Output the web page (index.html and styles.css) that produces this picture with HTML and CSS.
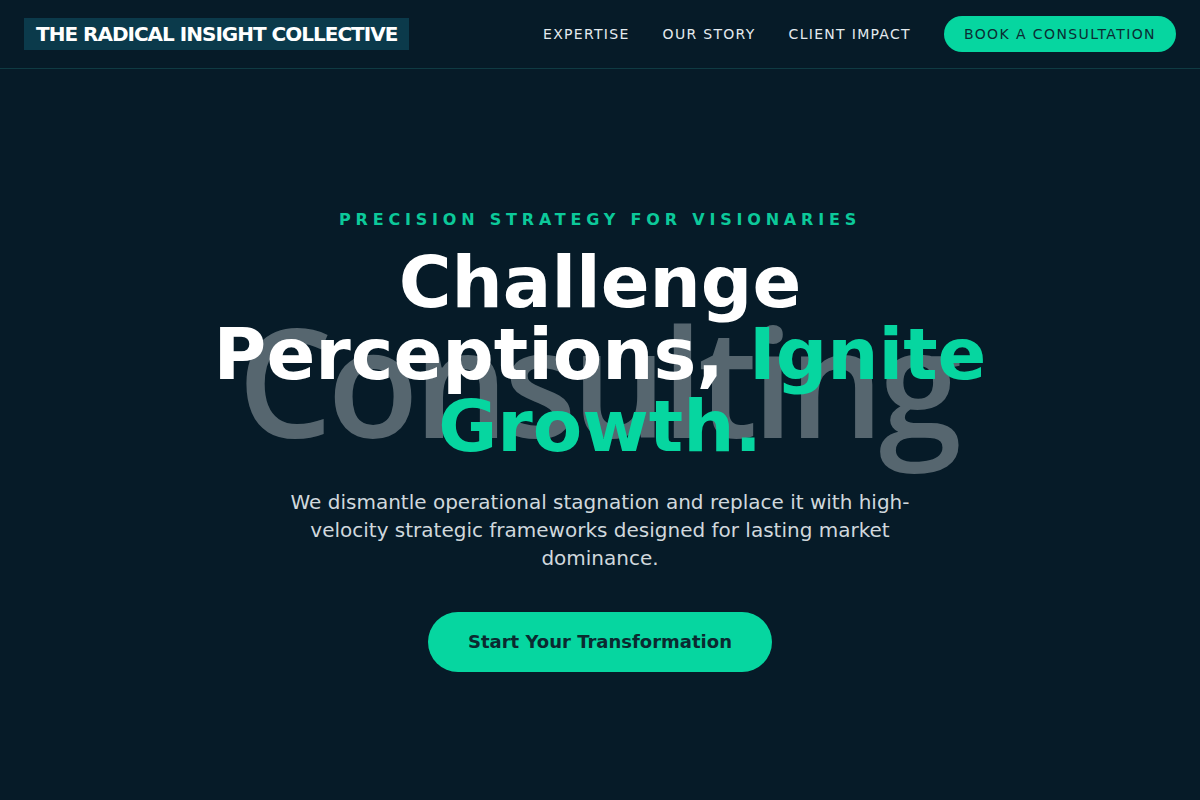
FILE: index.html
```html
<!DOCTYPE html>
<html lang="en">
<head>
<meta charset="utf-8">
<title>The Radical Insight Collective</title>
<link rel="stylesheet" href="styles.css">
</head>
<body>
<header class="site-header">
  <a class="logo" href="#">THE RADICAL INSIGHT COLLECTIVE</a>
  <nav class="nav">
    <a class="nav-link" href="#">EXPERTISE</a>
    <a class="nav-link" href="#">OUR STORY</a>
    <a class="nav-link" href="#">CLIENT IMPACT</a>
    <a class="nav-cta" href="#">BOOK A CONSULTATION</a>
  </nav>
</header>
<main class="hero">
  <div class="hero-inner">
    <p class="tagline">PRECISION STRATEGY FOR VISIONARIES</p>
    <div class="title-wrap">
      <span class="bg-word" aria-hidden="true">Consulting</span>
      <h1 class="title">Challenge Perceptions, <span class="accent">Ignite Growth.</span></h1>
    </div>
    <p class="lead">We dismantle operational stagnation and replace it with high-velocity strategic frameworks designed for lasting market dominance.</p>
    <a class="cta" href="#">Start Your Transformation</a>
  </div>
</main>
</body>
</html>
```
FILE: styles.css
```css
* { box-sizing: border-box; }
html, body { margin: 0; padding: 0; }
body {
  background: #061b28;
  color: #ffffff;
  font-family: "DejaVu Sans", sans-serif;
  min-height: 800px;
}
a { text-decoration: none; }

.site-header {
  height: 69px;
  display: flex;
  align-items: center;
  justify-content: space-between;
  padding: 0 24px;
  border-bottom: 1px solid #0f3b43;
}
.logo {
  display: block;
  background: #0b3a4b;
  color: #ffffff;
  font-weight: 700;
  font-size: 20px;
  letter-spacing: -1px;
  line-height: 32px;
  padding: 0 12px;
  margin-top: -1px;
}
.nav {
  display: flex;
  align-items: center;
  gap: 33px;
}
.nav-link {
  color: #e4eaee;
  font-size: 14px;
  letter-spacing: 1.3px;
}
.nav-cta {
  background: #06d6a0;
  color: #0b2d33;
  font-size: 14px;
  letter-spacing: 1.4px;
  line-height: 20px;
  padding: 8px 20px;
  border-radius: 999px;
}

.hero {
  min-height: 731px;
  display: flex;
  align-items: center;
  justify-content: center;
  padding: 0 24px;
}
.hero-inner {
  display: flex;
  flex-direction: column;
  align-items: center;
  text-align: center;
  margin-top: 12px;
}
.tagline {
  margin: 0 0 16px;
  color: #0cc99a;
  font-size: 16px;
  font-weight: 700;
  letter-spacing: 0.3em;
  line-height: 20px;
}
.title-wrap {
  position: relative;
  max-width: 900px;
}
.bg-word {
  position: absolute;
  left: 50%;
  top: 59px;
  transform: translateX(calc(-50% - 3px));
  font-family: "Open Sans", sans-serif;
  font-size: 150px;
  font-weight: 600;
  line-height: 1;
  letter-spacing: -0.035em;
  color: #56666f;
  white-space: nowrap;
  z-index: 0;
}
.title {
  position: relative;
  z-index: 1;
  margin: 0;
  font-size: 72px;
  font-weight: 700;
  line-height: 1;
  color: #ffffff;
}
.accent { color: #06d6a0; }
.lead {
  margin: 26px 0 40px;
  max-width: 640px;
  font-size: 20px;
  line-height: 28px;
  color: #d0d8dd;
}
.cta {
  display: inline-block;
  background: #06d6a0;
  color: #0b2a30;
  font-size: 18px;
  font-weight: 700;
  line-height: 24px;
  padding: 18px 40px;
  border-radius: 999px;
}
```
